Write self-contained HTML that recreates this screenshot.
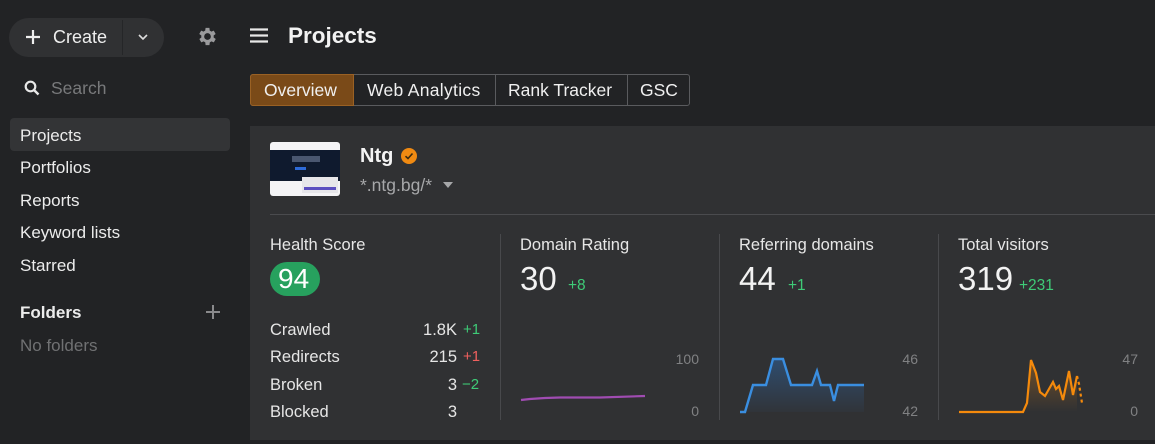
<!DOCTYPE html>
<html><head><meta charset="utf-8"><style>
*{margin:0;padding:0;box-sizing:border-box}
body{width:1155px;height:444px;background:#222325;font-family:"Liberation Sans",sans-serif;color:#eeeeef;position:relative;overflow:hidden}
.a{position:absolute;white-space:nowrap}
.nav{font-size:17px;color:#ececec;left:20px}
.lbl{font-size:16.5px;color:#e6e6e6}
.big{font-size:33px;color:#f2f2f2}
.g{color:#3ecb77}
.r{color:#f0605e}
.ax{font-size:14px;color:#808183}
.vl{position:absolute;width:1px;background:#48494c;top:234px;height:186px}
</style></head><body>
<div class="a" style="left:9px;top:18px;width:155px;height:39px;border-radius:20px;background:#303133"></div>
<div class="a" style="left:122px;top:20px;width:1px;height:35px;background:#252628"></div>
<svg class="a" style="left:25px;top:29px" width="16" height="16"><path d="M8 1V15M1 8H15" stroke="#eee" stroke-width="2.2"/></svg>
<div class="a" style="left:53px;top:27px;font-size:18px;color:#eee">Create</div>
<svg class="a" style="left:138px;top:34px" width="10" height="7"><path d="M1 1L5 5L9 1" stroke="#ddd" stroke-width="1.6" fill="none"/></svg>
<svg class="a" style="left:196px;top:25px" width="23" height="23" viewBox="0 0 24 24"><path fill="#9a9a9c" d="M19.4 13a7.5 7.5 0 0 0 0-2l2.1-1.6-2-3.5-2.5 1a7.6 7.6 0 0 0-1.7-1L15 3h-4l-.4 2.9a7.6 7.6 0 0 0-1.7 1l-2.5-1-2 3.5L6.6 11a7.5 7.5 0 0 0 0 2l-2.1 1.6 2 3.5 2.5-1a7.6 7.6 0 0 0 1.7 1L11 21h4l.4-2.9a7.6 7.6 0 0 0 1.7-1l2.5 1 2-3.5zM13 15.5A3.5 3.5 0 1 1 13 8.5a3.5 3.5 0 0 1 0 7z" transform="translate(-1 0)"/></svg>
<svg class="a" style="left:250px;top:28px" width="18" height="15"><path d="M0 1.5H18M0 7.5H18M0 13.5H18" stroke="#e8e8e8" stroke-width="2.2"/></svg>
<div class="a" style="left:288px;top:23px;font-size:22.5px;font-weight:bold;color:#f2f2f2">Projects</div>
<svg class="a" style="left:24px;top:80px" width="16" height="16"><circle cx="6.5" cy="6.5" r="4.8" stroke="#e8e8e8" stroke-width="2.2" fill="none"/><path d="M10 10L14.5 14.5" stroke="#e8e8e8" stroke-width="2.4"/></svg>
<div class="a" style="left:51px;top:78px;font-size:17.5px;color:#78797b">Search</div>
<div class="a" style="left:10px;top:118px;width:220px;height:33px;border-radius:4px;background:#333436"></div>
<div class="a nav" style="top:126px">Projects</div>
<div class="a nav" style="top:158px">Portfolios</div>
<div class="a nav" style="top:191px">Reports</div>
<div class="a nav" style="top:223px">Keyword lists</div>
<div class="a nav" style="top:256px">Starred</div>
<div class="a nav" style="top:303px;font-weight:bold">Folders</div>
<svg class="a" style="left:205px;top:304px" width="16" height="16"><path d="M8 1V15M1 8H15" stroke="#8a8a8c" stroke-width="2"/></svg>
<div class="a nav" style="top:336px;color:#707173">No folders</div>
<div class="a" style="left:250px;top:74px;width:440px;height:32px;border:1px solid #5a5b5e;border-radius:3px"></div>
<div class="a" style="left:250px;top:74px;width:104px;height:32px;background:#7a4a18;border:1px solid #9a6124;border-radius:3px 0 0 3px"></div>
<div class="a" style="left:495px;top:75px;width:1px;height:30px;background:#5a5b5e"></div>
<div class="a" style="left:627px;top:75px;width:1px;height:30px;background:#5a5b5e"></div>
<div class="a" style="left:264px;top:80px;font-size:17.5px;color:#f0f0f0">Overview</div>
<div class="a" style="left:367px;top:80px;font-size:17.5px;color:#f0f0f0;letter-spacing:.3px">Web Analytics</div>
<div class="a" style="left:508px;top:80px;font-size:17.5px;color:#f0f0f0">Rank Tracker</div>
<div class="a" style="left:640px;top:80px;font-size:17.5px;color:#f0f0f0">GSC</div>
<div class="a" style="left:250px;top:126px;width:905px;height:314px;background:#303133"></div>
<div class="a" style="left:270px;top:142px;width:70px;height:54px;border-radius:3px;background:#f4f4f6;overflow:hidden">
 <div style="position:absolute;left:0;top:8px;width:70px;height:31px;background:#0f1a2e"></div>
 <div style="position:absolute;left:22px;top:14px;width:28px;height:6px;background:#4a5770"></div>
 <div style="position:absolute;left:25px;top:25px;width:11px;height:3px;background:#2e6bd8"></div>
 <div style="position:absolute;left:32px;top:35px;width:36px;height:16px;background:#e6e6ea"></div>
 <div style="position:absolute;left:34px;top:45px;width:32px;height:3px;background:#5b4fc0"></div>
</div>
<div class="a" style="left:360px;top:145px;font-size:20px;font-weight:bold;color:#f4f4f4">Ntg</div>
<svg class="a" style="left:400px;top:147px" width="18" height="18" viewBox="0 0 18 18"><circle cx="9" cy="9" r="8" fill="#f08a12"/><path d="M5.5 9.2L8 11.5L12.5 6.5" stroke="#3a2a10" stroke-width="1.6" fill="none"/></svg>
<div class="a" style="left:360px;top:175px;font-size:17.5px;color:#a6a7a9">*.ntg.bg/*</div>
<svg class="a" style="left:443px;top:182px" width="10" height="7"><path d="M0 0H10L5 6Z" fill="#a6a7a9"/></svg>
<div class="a" style="left:270px;top:214px;width:885px;height:1px;background:#4a4b4e"></div>
<div class="vl" style="left:500px"></div><div class="vl" style="left:719px"></div><div class="vl" style="left:938px"></div>
<div class="a lbl" style="left:270px;top:236px">Health Score</div>
<div class="a" style="left:270px;top:262px;width:50px;height:34px;border-radius:17px;background:#27a15e"></div>
<div class="a" style="left:278px;top:263px;font-size:28px;color:#fff">94</div>
<div class="a lbl" style="left:270px;top:321px">Crawled</div>
<div class="a lbl" style="left:270px;top:348px">Redirects</div>
<div class="a lbl" style="left:270px;top:376px">Broken</div>
<div class="a lbl" style="left:270px;top:403px">Blocked</div>
<div class="a lbl" style="left:380px;width:77px;text-align:right;top:321px">1.8K</div>
<div class="a lbl" style="left:380px;width:77px;text-align:right;top:348px">215</div>
<div class="a lbl" style="left:380px;width:77px;text-align:right;top:376px">3</div>
<div class="a lbl" style="left:380px;width:77px;text-align:right;top:403px">3</div>
<div class="a g" style="left:463px;top:321px;font-size:15px">+1</div>
<div class="a r" style="left:463px;top:348px;font-size:15px">+1</div>
<div class="a g" style="left:462px;top:376px;font-size:15px">−2</div>
<div class="a lbl" style="left:520px;top:236px">Domain Rating</div>
<div class="a big" style="left:520px;top:260px">30</div>
<div class="a g" style="left:568px;top:277px;font-size:15.5px">+8</div>
<svg class="a" style="left:0;top:0" width="1155" height="444">
<defs>
<linearGradient id="b" x1="0" y1="0" x2="0" y2="1"><stop offset="0" stop-color="#2e6fb8" stop-opacity=".45"/><stop offset="1" stop-color="#2e6fb8" stop-opacity="0.05"/></linearGradient>
<linearGradient id="o" x1="0" y1="0" x2="0" y2="1"><stop offset="0" stop-color="#f08a12" stop-opacity=".35"/><stop offset="1" stop-color="#f08a12" stop-opacity="0"/></linearGradient>
</defs>
<path d="M521 400L530 399L545 398L560 397.5L600 397.5L645 396" stroke="#a04cb2" stroke-width="2.2" fill="none"/>
<path d="M740 412L745 412L753 385L766 385L773 359L783 359L791 385L812 385L817 371L821 385L830 385L834 401L838 385L864 385L864 412Z" fill="url(#b)"/>
<path d="M740 412L745 412L753 385L766 385L773 359L783 359L791 385L812 385L817 371L821 385L830 385L834 401L838 385L864 385" stroke="#3a8ee0" stroke-width="2.4" fill="none"/>
<path d="M959 412L1023 412L1027 403L1031 360L1036 373L1040 392L1045 396L1053 382L1056 389L1059 386L1063 400L1069 371L1073 395L1077 376L1077 412Z" fill="url(#o)"/>
<path d="M959 412L1023 412L1027 403L1031 360L1036 373L1040 392L1045 396L1053 382L1056 389L1059 386L1063 400L1069 371L1073 395L1077 376" stroke="#f58a0c" stroke-width="2.2" fill="none"/>
<path d="M1077 376L1079 384L1082 403" stroke="#f58a0c" stroke-width="2.2" stroke-dasharray="3 3" fill="none"/>
</svg>
<div class="a ax" style="left:660px;width:39px;text-align:right;top:351px">100</div>
<div class="a ax" style="left:660px;width:39px;text-align:right;top:403px">0</div>
<div class="a lbl" style="left:739px;top:236px">Referring domains</div>
<div class="a big" style="left:739px;top:260px">44</div>
<div class="a g" style="left:788px;top:277px;font-size:15.5px">+1</div>
<div class="a ax" style="left:880px;width:38px;text-align:right;top:351px">46</div>
<div class="a ax" style="left:880px;width:38px;text-align:right;top:403px">42</div>
<div class="a lbl" style="left:958px;top:236px">Total visitors</div>
<div class="a big" style="left:958px;top:260px">319</div>
<div class="a g" style="left:1019px;top:277px;font-size:15.5px">+231</div>
<div class="a ax" style="left:1100px;width:38px;text-align:right;top:351px">47</div>
<div class="a ax" style="left:1100px;width:38px;text-align:right;top:403px">0</div>
</body></html>
